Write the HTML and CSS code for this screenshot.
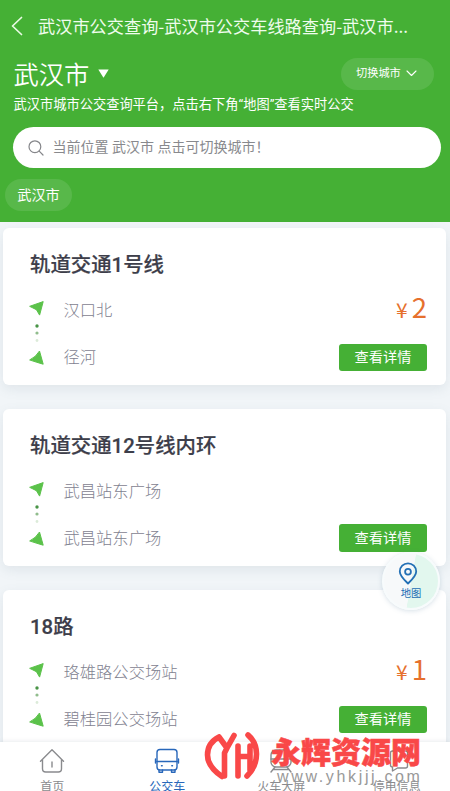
FILE: index.html
```html
<!DOCTYPE html>
<html lang="zh-CN">
<head>
<meta charset="utf-8">
<title>武汉市公交查询</title>
<link rel="stylesheet" href="styles.css">
</head>
<body>
<svg class="defs" width="0" height="0" aria-hidden="true">
  <symbol id="route" viewBox="0 0 18 70">
    <path d="M2 7.2 15.2 2.6 11.6 16.1 8.6 11Z" fill="#5bc24a" stroke="#5bc24a" stroke-linejoin="round"/>
    <circle cx="9" cy="27" r="1.7" fill="#499447"/>
    <circle cx="9" cy="34" r="1.6" fill="#91bd8d"/>
    <circle cx="9" cy="41.5" r="1.4" fill="#dcebd9"/>
    <path d="M2 60.8Q8 58 11.500 52L15.200 65.200 8.600 63.200Z" fill="#5bc24a" stroke="#5bc24a" stroke-linejoin="round"/>
  </symbol>
</svg>
<header class="header">
  <div class="navbar">
    <svg class="back" width="12" height="20" viewBox="0 0 12 20"><path d="M10.5 1.5 1.5 10l9 8.5"/></svg>
    <h1 class="page-title">武汉市公交查询-武汉市公交车线路查询-武汉市...</h1>
  </div>
  <div class="city-row">
    <span class="city">武汉市</span>
    <svg class="caret" width="11" height="9" viewBox="0 0 11 9"><path d="M.3.5h10.4L5.5 8.7Z"/></svg>
    <button class="switch">切换城市<svg width="11" height="7" viewBox="0 0 11 7"><path d="M1 1l4.5 4.5L10 1"/></svg></button>
  </div>
  <p class="intro">武汉市城市公交查询平台，点击右下角“地图”查看实时公交</p>
  <div class="search">
    <svg width="16" height="16" viewBox="0 0 16 16"><circle cx="6.9" cy="6.7" r="5.9"/><path d="M11.2 11.2 15 15"/></svg>
    <span>当前位置 武汉市 点击可切换城市！</span>
  </div>
  <span class="tag">武汉市</span>
</header>
<main class="list">
  <article class="card">
    <h2>轨道交通1号线</h2>
    <div class="card-body">
      <svg class="route" width="18" height="70"><use href="#route"/></svg>
      <div class="stops"><span>汉口北</span><span>径河</span></div>
      <div class="side"><div class="price"><small>¥</small>2</div><button class="detail">查看详情</button></div>
    </div>
  </article>
  <article class="card">
    <h2>轨道交通12号线内环</h2>
    <div class="card-body">
      <svg class="route" width="18" height="70"><use href="#route"/></svg>
      <div class="stops"><span>武昌站东广场</span><span>武昌站东广场</span></div>
      <div class="side"><button class="detail">查看详情</button></div>
    </div>
  </article>
  <article class="card">
    <h2>18路</h2>
    <div class="card-body">
      <svg class="route" width="18" height="70"><use href="#route"/></svg>
      <div class="stops"><span>珞雄路公交场站</span><span>碧桂园公交场站</span></div>
      <div class="side"><div class="price"><small>¥</small>1</div><button class="detail">查看详情</button></div>
    </div>
  </article>
</main>
<a class="map-button">
  <svg width="20" height="23" viewBox="0 0 20 23"><path d="M10 21.5C6.5 18 1.8 14 1.8 9.5a8.2 8.2 0 0 1 16.4 0C18.2 14 13.500 18 10 21.500Z"/><circle cx="10" cy="9.700" r="2.900"/></svg>
  <span>地图</span>
</a>
<nav class="tabs">
  <a class="tab">
    <svg width="26" height="26" viewBox="0 0 26 26"><path d="M1.500 13.200 13 1.800l11.500 11.400M3.500 11.500v9.300q0 3.200 3.200 3.200h12.600q3.200 0 3.200-3.200v-9.300M13 14v5"/></svg>
    <span>首页</span>
  </a>
  <a class="tab active">
    <svg width="26" height="26" viewBox="0 0 26 26"><rect x="3" y="1.500" width="20" height="20.500" rx="3"/><path d="M3 13.500h20M1.500 11v4M24.500 11v4M5 22v2.300h3.500V22M17.500 22v2.300H21V22M7.500 17.800h.7M17.800 17.800h.7"/></svg>
    <span>公交车</span>
  </a>
  <a class="tab">
    <svg width="26" height="26" viewBox="0 0 26 26"><rect x="3" y="2" width="20" height="17" rx="5"/><path d="M3 11h20M8 15h.7M17 15h.7M7 19l-4 5M19 19l4 5M5 21.500h16"/></svg>
    <span>火车大屏</span>
  </a>
  <a class="tab">
    <svg width="26" height="26" viewBox="0 0 26 26"><path d="M23.500 13V5q0-2-2-2h-13q-2 0-2 2v12q0 2 2 2v4l5-3h8q2 0 2-2v-5"/></svg>
    <span>停电信息</span>
  </a>
</nav>
<div class="watermark">
  <svg width="58" height="50" viewBox="0 0 58 50"><path d="M16 7C8 11 4.500 17 4.500 25s5 15 14.500 21.500M16 7l8 11L31 5.500M24 18l-2.500 5V46M45 5c6 5 8.500 11 8.500 19S50 40 44 46M35 16v30M35 26.500h12M47 16v24"/></svg>
  <div class="wm-text"><strong>永辉资源网</strong><span>www.yhkjjj.com</span></div>
</div>
</body>
</html>
```

FILE: styles.css
```css
* { box-sizing: border-box; }
html, body { height: 100%; }
body {
  margin: 0;
  overflow: hidden;
  background: #f1f5f8;
  font-family: Roboto, "Noto Sans CJK SC", sans-serif;
}
h1, h2, p { margin: 0; font-weight: 400; }
button { border: 0; padding: 0; font-family: inherit; color: #fff; }
svg { fill: none; flex: none; stroke-linecap: round; stroke-linejoin: round; }
.defs { position: absolute; }

.header { height: 222px; background: #45b035; color: #fff; }
.navbar { display: flex; align-items: center; height: 52px; padding-left: 11px; }
.back { stroke: #e9fbe5; stroke-width: 1.7; }
.page-title { margin-left: 15px; font-family: "Noto Sans CJK SC", sans-serif; font-size: 17.200px; line-height: 26px; white-space: nowrap; color: #effced; }
.city-row { display: flex; align-items: center; height: 43px; padding: 0 16px 0 13.500px; }
.city { padding-top: 4px; font-size: 25.300px; font-weight: 350; line-height: 39px; }
.caret { margin: 0 0 0 9px; fill: #fff; }
.switch {
  display: flex; align-items: center; gap: 5px;
  width: 93px; height: 32px; margin-left: auto; padding-left: 15px;
  border-radius: 16px; background: #58b84a;
  font-size: 11.200px; line-height: 32px;
}
.switch svg { stroke: #fff; stroke-width: 1.1; }
.intro { padding-left: 13.500px; font-size: 13.240px; line-height: 20px; white-space: nowrap; }
.search {
  display: flex; align-items: center; gap: 8.500px;
  height: 41px; margin: 12px 9px 0 13px; padding-left: 15px;
  border-radius: 21px; background: #fff;
  font-size: 14px; line-height: 20px; color: #88898d;
}
.search svg { stroke: #85868a; stroke-width: 1.2; }
.search span { padding-bottom: 2px; }
.tag {
  display: block; width: 67px; height: 32px; margin: 11px 0 0 5px;
  border-radius: 16px; background: #58b84a;
  font-size: 14.200px; line-height: 32px; text-align: center;
}

.list { display: grid; gap: 24.500px; padding: 6px 4px 0 3px; }
.card {
  height: 156.500px; padding: 21px 19px 0 27px;
  border-radius: 6px; background: #fff;
  box-shadow: 0 4px 12px rgba(110, 130, 150, .13);
}
.card h2 { font-size: 20.400px; font-weight: 500; line-height: 32px; color: #3d3e4a; -webkit-text-stroke: .2px #3d3e4a; }
.card-body { display: flex; height: 70px; margin-top: 18px; }
.route { margin-left: -2px; }
.stops { display: grid; grid-template-rows: 47px 47px; margin: -12px 0 0 17.500px; }
.stops span { font-size: 16.300px; line-height: 47px; font-weight: 300; color: #7f8290; }
.side { display: flex; flex-direction: column; justify-content: flex-end; align-items: flex-end; margin-left: auto; height: 72px; }
.price { margin-bottom: 15px; font-family: "Noto Sans CJK SC", sans-serif; font-size: 27.500px; line-height: 40px; color: #e6702d; }
.price small { margin-right: 4px; font-size: 21px; }
.detail { width: 88px; height: 28px; border-radius: 3px; background: #45b035; font-size: 14.200px; line-height: 27px; }

.map-button {
  position: absolute; left: 382px; top: 552px;
  display: flex; flex-direction: column; align-items: center;
  width: 58px; height: 58px; padding: 9px 3px 0 0;
  border-radius: 50%; border: 2px solid #f7fbfc;
  background: linear-gradient(100deg, #f7f9fa 50%, #e2f7ee 51%);
  box-shadow: 0 1px 5px rgba(90, 130, 160, .25);
  font-size: 10.300px; line-height: 16px; color: #1b6cb4;
}
.map-button svg { margin: -1px 3px 0 0; stroke: #2370b5; stroke-width: 1.8; }
.map-button span { margin: 1px 0 0 3px; }

.tabs {
  position: absolute; left: 0; right: 0; bottom: 0;
  display: grid; grid-template-columns: repeat(4, 1fr);
  height: 49px; overflow: hidden;
  background: #fff; box-shadow: 0 -1px 4px rgba(80, 100, 120, .12);
}
.tab { display: flex; flex-direction: column; align-items: center; padding-top: 6px; font-size: 12px; line-height: 18px; color: #8a8b8e; white-space: nowrap; }
.tab svg { stroke: currentColor; stroke-width: 1.4; }
.tab span { margin-top: 4px; }
.tab:first-child { padding-right: 8px; }
.tab.active { padding-right: 3px; color: #2867ba; }
.tab:last-child { padding-left: 6px; }

.watermark { position: absolute; left: 203px; top: 730px; display: flex; }
.watermark svg { stroke: #f94848; stroke-width: 5.600; }
.wm-text { display: flex; flex-direction: column; margin-left: 10px; white-space: nowrap; }
.wm-text strong { font-size: 30px; font-weight: 900; line-height: 46px; color: #f94848; -webkit-text-stroke: .5px #f94848; }
.wm-text span { margin: -8px 0 0 6px; font-family: "Liberation Sans", sans-serif; font-size: 16px; line-height: 18px; letter-spacing: 2.650px; color: #999; }
```
